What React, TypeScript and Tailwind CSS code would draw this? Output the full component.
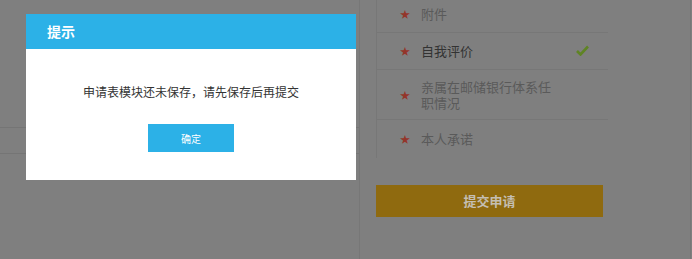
import React from "react";

const rows = [
  { label: "附件", done: false, h: "h-[37px]" },
  { label: "自我评价", done: true, h: "h-[37px]", dark: true },
  { label: "亲属在邮储银行体系任职情况", done: false, h: "h-[50px]" },
  { label: "本人承诺", done: false, h: "h-[38px]" },
];

export default function App() {
  return (
    <div
      className="relative h-[259px] w-[692px] overflow-hidden bg-[#7f7f7f]"
      style={{ fontFamily: '"Noto Sans CJK SC", "Noto Sans", sans-serif' }}
    >
      <div className="flex h-full">
        {/* left side (covered) */}
        <div className="w-[360px] shrink-0 border-r border-[#777]">
          <div className="mt-[127px] h-[27px] border-y border-[#757575]" />
        </div>

        {/* right side: module list */}
        <div className="w-[331px] border-r border-[#777] pl-[16px]">
          <div className="-mt-[4px] w-[232px] border-l border-[#777]">
            {rows.map((r, i) => (
              <div
                key={r.label}
                className={`flex items-center ${r.h} ${i < rows.length - 1 ? "border-b border-[#777]" : ""}`}
              >
                <span className="ml-[23px] w-[21px] text-[10px] leading-none text-[#94352a]">★</span>
                <span
                  className={`w-[140px] text-[13px] leading-[16px] ${r.dark ? "text-[#333]" : "text-[#5a5a5a]"}`}
                >
                  {r.label}
                </span>
                {r.done && (
                  <svg className="ml-[15px] mt-[-2px]" width="13" height="11" viewBox="0 0 13 11">
                    <path d="M1 6 L4.5 9.5 L12 1.5" fill="none" stroke="#5f8424" strokeWidth="2.6" />
                  </svg>
                )}
              </div>
            ))}
          </div>
          <button className="mt-[27px] flex h-[32px] w-[227px] items-center justify-center bg-[#8f6a0f] text-[13px] font-bold text-[#c4beb2]">
            提交申请
          </button>
        </div>
      </div>

      {/* dialog */}
      <div className="absolute left-[26px] top-[14px] h-[166px] w-[330px] bg-white">
        <div className="flex h-[35px] items-center bg-[#2cb1e7] pl-[21px] text-[14px] font-bold text-white">
          提示
        </div>
        <div className="flex flex-col items-center">
          <p className="mt-[35px] text-[12px] leading-[16px] text-[#333]">申请表模块还未保存，请先保存后再提交</p>
          <button className="mt-[24px] flex h-[28px] w-[86px] items-center justify-center bg-[#2cb1e7] text-[10px] text-white">
            确定
          </button>
        </div>
      </div>
    </div>
  );
}
